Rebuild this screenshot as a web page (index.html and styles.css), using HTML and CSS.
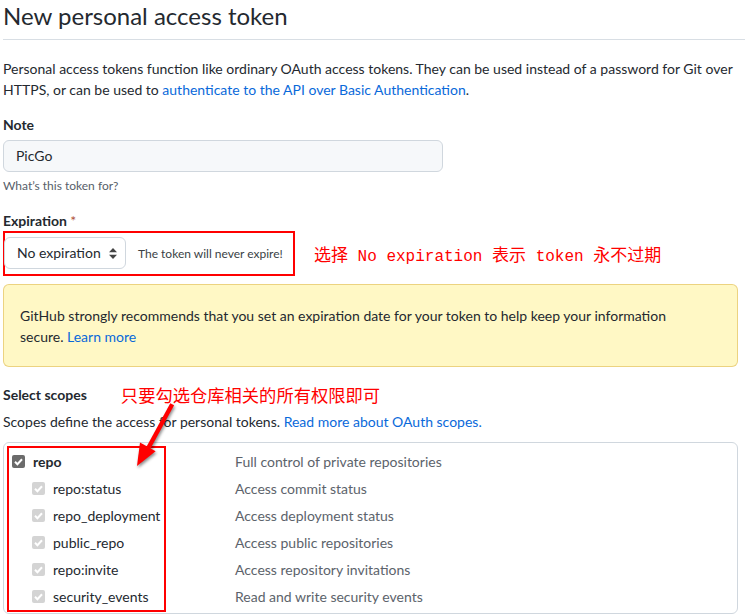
FILE: index.html
```html
<!DOCTYPE html>
<html lang="en">
<head>
<meta charset="utf-8">
<title>New personal access token</title>
<link rel="stylesheet" href="styles.css">
</head>
<body>
<div class="page">
  <h1 class="title">New personal access token</h1>
  <p class="intro">Personal access tokens function like ordinary OAuth access tokens. They can be used instead of a password for Git over HTTPS, or can be used to <a href="#">authenticate to the API over Basic Authentication</a>.</p>

  <div class="field">
    <label class="label">Note</label>
    <div class="input">PicGo</div>
    <div class="hint">What’s this token for?</div>
  </div>

  <div class="field exp">
    <label class="label">Expiration <span class="req">*</span></label>
    <div class="exp-row">
      <div class="hl">
        <div class="select">No expiration
          <svg class="updown" width="8" height="11" viewBox="0 0 8 11"><path d="M4 0L8 4.2H0z M4 11L0 6.8H8z" fill="#444"/></svg>
        </div>
        <span class="never">The token will never expire!</span>
      </div>
      <span class="anno mono"><span class="han">选择</span> No expiration <span class="han">表示</span> token <span class="han">永不过期</span></span>
    </div>
  </div>

  <div class="flash">GitHub strongly recommends that you set an expiration date for your token to help keep your information secure. <a href="#">Learn more</a></div>

  <div class="scopes-head">
    <span class="label">Select scopes</span>
    <span class="anno cjk">只要勾选仓库相关的所有权限即可</span>
  </div>
  <p class="scopes-desc">Scopes define the access for personal tokens. <a href="#">Read more about OAuth scopes.</a></p>

  <div class="scopes">
    <div class="row top"><span class="cb dark"><svg viewBox="0 0 13 13"><path d="M3 6.8l2.4 2.4L10 4.3" stroke="#fff" stroke-width="2" fill="none"/></svg></span><span class="name">repo</span><span class="desc">Full control of private repositories</span></div>
    <div class="row sub"><span class="cb light"><svg viewBox="0 0 13 13"><path d="M3 6.8l2.4 2.4L10 4.3" stroke="#fff" stroke-width="2" fill="none"/></svg></span><span class="name">repo:status</span><span class="desc">Access commit status</span></div>
    <div class="row sub"><span class="cb light"><svg viewBox="0 0 13 13"><path d="M3 6.8l2.4 2.4L10 4.3" stroke="#fff" stroke-width="2" fill="none"/></svg></span><span class="name">repo_deployment</span><span class="desc">Access deployment status</span></div>
    <div class="row sub"><span class="cb light"><svg viewBox="0 0 13 13"><path d="M3 6.8l2.4 2.4L10 4.3" stroke="#fff" stroke-width="2" fill="none"/></svg></span><span class="name">public_repo</span><span class="desc">Access public repositories</span></div>
    <div class="row sub"><span class="cb light"><svg viewBox="0 0 13 13"><path d="M3 6.8l2.4 2.4L10 4.3" stroke="#fff" stroke-width="2" fill="none"/></svg></span><span class="name">repo:invite</span><span class="desc">Access repository invitations</span></div>
    <div class="row sub"><span class="cb light"><svg viewBox="0 0 13 13"><path d="M3 6.8l2.4 2.4L10 4.3" stroke="#fff" stroke-width="2" fill="none"/></svg></span><span class="name">security_events</span><span class="desc">Read and write security events</span></div>
    <div class="scope-frame"></div>
  </div>

  <svg class="arrow" width="745" height="616" viewBox="0 0 745 616">
    <g fill="#f00" stroke="none">
      <path d="M170.3 403.2 L174.1 405.3 L150.3 448.9 L146.5 446.8 Z"/>
      <path d="M137 466 L140 442.5 L155.6 451.3 Z"/>
    </g>
  </svg>
</div>
</body>
</html>
```
FILE: styles.css
```css
* { box-sizing: border-box; }
html, body { margin: 0; padding: 0; background: #fff; }
body {
  font-family: Lato, "Noto Sans", sans-serif;
  font-size: 14px;
  line-height: 21px;
  color: #24292f;
}
a { color: #0969da; text-decoration: none; }

.page {
  position: relative;
  width: 745px;
  height: 616px;
  overflow: hidden;
  padding-left: 3px;
}

.title {
  margin: 0;
  font-size: 24px;
  font-weight: 400;
  line-height: 32px;
  padding-bottom: 7px;
  border-bottom: 1px solid #d8dee4;
}

.intro {
  margin: 18px 0 0;
  width: 735px;
}

.field { margin-top: 14px; }
.label {
  display: block;
  font-weight: 700;
  line-height: 21px;
}
.req { color: #b0533a; font-weight: 400; }

.input {
  margin-top: 5px;
  width: 440px;
  height: 32px;
  padding: 0 12px;
  line-height: 30px;
  background: #f6f8fa;
  border: 1px solid #d0d7de;
  border-radius: 6px;
}
.hint {
  margin-top: 5px;
  font-size: 12px;
  line-height: 18px;
  color: #57606a;
}

.exp { margin-top: 15px; }
.exp-row {
  display: flex;
  align-items: center;
  gap: 19px;
}
.hl {
  display: flex;
  align-items: center;
  gap: 12px;
  width: 292px;
  height: 45px;
  border: 2px solid #f00;
  padding: 2px 0 3px 0;
}
.select {
  position: relative;
  width: 122px;
  height: 32px;
  margin-left: -1px;
  padding-left: 12px;
  line-height: 30px;
  border: 1px solid #d0d7de;
  border-radius: 6px;
  background: #fff;
}
.updown { position: absolute; right: 8px; top: 10px; }
.never { font-size: 12px; color: #3a3f45; }

.anno { color: #f00; }
.mono {
  font-family: "Liberation Mono", "Noto Sans CJK SC", monospace;
  font-size: 16px;
  padding-top: 4px;
}
.han {
  font-family: "Noto Sans CJK SC", sans-serif;
  font-size: 17px;
}
.cjk {
  font-family: "Noto Sans CJK SC", sans-serif;
  font-size: 17.3px;
}

.flash {
  margin-top: 8px;
  width: 735px;
  padding: 20px 40px 19px 16px;
  background: #fff8c5;
  border: 1px solid rgba(212, 167, 44, 0.45);
  border-radius: 6px;
}

.scopes-head {
  margin-top: 17px;
  display: flex;
  align-items: center;
  gap: 34px;
  height: 21px;
}
.scopes-desc { margin: 6px 0 0; }

.scopes {
  position: relative;
  margin-top: 10px;
  width: 735px;
  padding: 5px 0 3px 8px;
  border: 1px solid #d0d7de;
  border-radius: 6px;
}
.row {
  display: flex;
  align-items: center;
  height: 27px;
}
.row.sub { padding-left: 20px; }
.cb {
  width: 13px;
  height: 13px;
  border-radius: 2px;
  display: inline-flex;
  flex: none;
}
.cb svg { width: 13px; height: 13px; }
.cb.dark { background: #6b6b6b; }
.cb.light { background: #d4d4d4; }
.name { margin-left: 8px; width: 202px; flex: none; }
.row.sub .name { width: 182px; }
.row.top .name { font-weight: 700; }
.desc { color: #5c636b; }

.scope-frame {
  position: absolute;
  left: 3px;
  top: 3px;
  width: 159px;
  height: 166px;
  border: 2px solid #f00;
}

.arrow {
  position: absolute;
  left: 0;
  top: 0;
  pointer-events: none;
  filter: drop-shadow(1px 2px 1.5px rgba(0,0,0,0.45));
}
```
